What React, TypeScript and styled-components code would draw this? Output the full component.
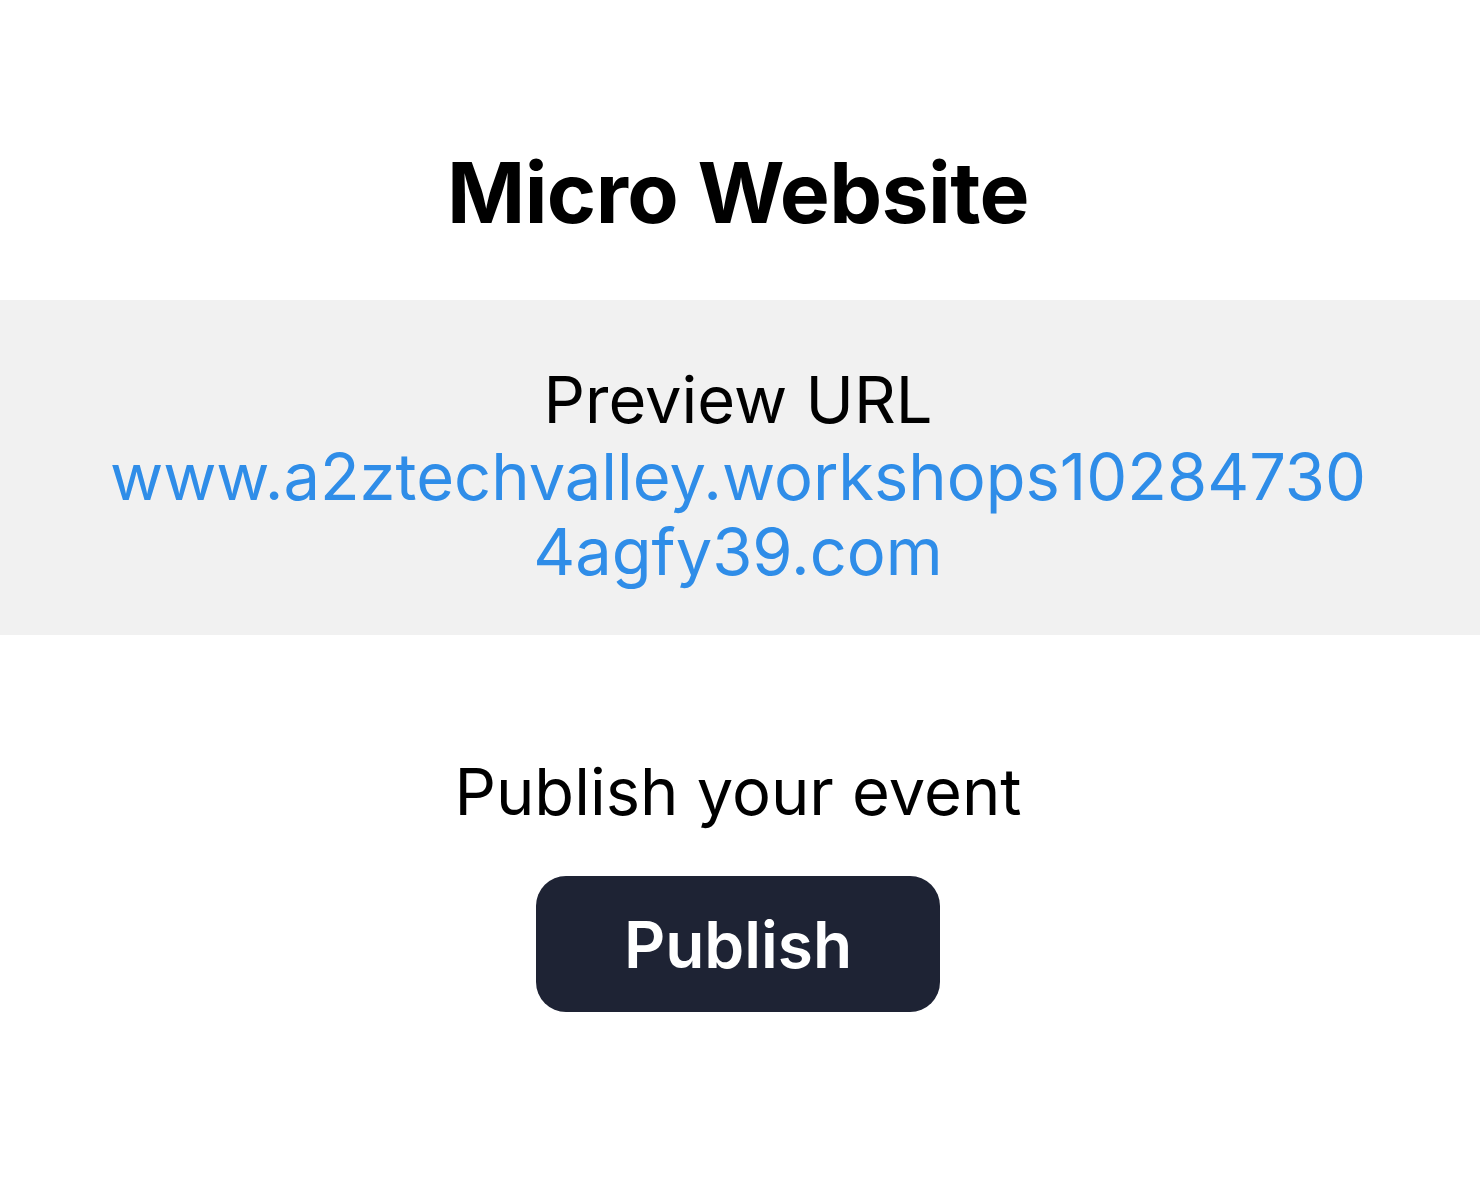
import React from "react";
import styled, { createGlobalStyle } from "styled-components";

const Global = createGlobalStyle`
  html, body { margin: 0; padding: 0; background: #ffffff; }
  body { font-family: Inter, "Noto Sans", sans-serif; color: #000; }
`;

const Page = styled.main`
  display: flex;
  flex-direction: column;
  align-items: stretch;
  width: 1480px;
  min-height: 1200px;
`;

const Header = styled.header`
  height: 300px;
  box-sizing: border-box;
  padding: 140px 4px 0 0;
  text-align: center;
`;

const Title = styled.h1`
  margin: 0;
  font-size: 84px;
  font-weight: 700;
  line-height: 106px;
  letter-spacing: -0.6px;
`;

const Band = styled.section`
  background: #f1f1f1;
  height: 335px;
  box-sizing: border-box;
  padding: 62px 102px 0 98px;
  text-align: center;
`;

const Label = styled.div`
  font-size: 65px;
  line-height: 75px;
  font-weight: 400;
  margin-bottom: 2px;
`;

const Link = styled.a`
  display: block;
  font-size: 65px;
  line-height: 75px;
  color: #2f8de8;
  text-decoration: none;
  word-break: break-all;
`;

const PublishArea = styled.section`
  display: flex;
  flex-direction: column;
  align-items: center;
  padding: 119px 4px 0 0;
`;

const PublishText = styled.div`
  font-size: 65px;
  line-height: 75px;
`;

const Button = styled.button`
  margin-top: 47px;
  width: 404px;
  height: 136px;
  border: none;
  border-radius: 30px;
  background: #1e2334;
  color: #fff;
  font-family: Inter, "Noto Sans", sans-serif;
  font-size: 64px;
  font-weight: 600;
  cursor: pointer;
`;

export default function App() {
  return (
    <>
      <Global />
      <Page>
        <Header>
          <Title>Micro Website</Title>
        </Header>
        <Band>
          <Label>Preview URL</Label>
          <Link href="#">www.a2ztechvalley.workshops102847304agfy39.com</Link>
        </Band>
        <PublishArea>
          <PublishText>Publish your event</PublishText>
          <Button>Publish</Button>
        </PublishArea>
      </Page>
    </>
  );
}
